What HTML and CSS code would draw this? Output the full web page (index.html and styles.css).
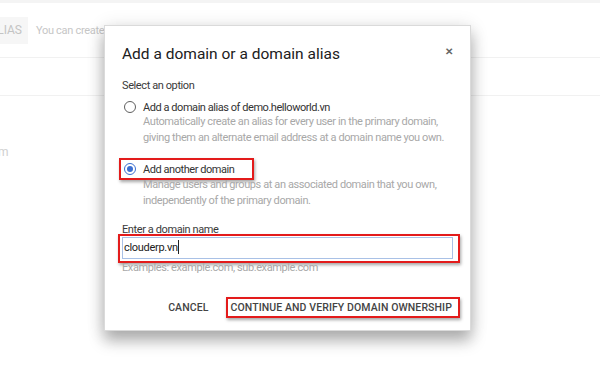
FILE: index.html
```html
<!DOCTYPE html>
<html lang="en">
<head>
  <meta charset="UTF-8">
  <title>Add a domain</title>
  <link rel="stylesheet" href="styles.css">
</head>
<body>
  <div class="page">
    <div class="top-strip"></div>
    <div class="toolbar">
      <span class="ghost-btn">LIAS</span>
      <span class="hint">You can create multiple domain aliases for your organization</span>
    </div>
    <div class="row"></div>
    <div class="row tall"><span class="faded">m</span></div>
  </div>

  <div class="dialog">
    <div class="dialog-head">
      <h1>Add a domain or a domain alias</h1>
      <span class="close">&#x2715;</span>
    </div>
    <p class="label">Select an option</p>

    <div class="option">
      <div class="option-line">
        <span class="radio"></span>
        <span class="option-title">Add a domain alias of demo.helloworld.vn</span>
      </div>
      <p class="option-desc">Automatically create an alias for every user in the primary domain, giving them an alternate email address at a domain name you own.</p>
    </div>

    <div class="option">
      <div class="option-line marked">
        <span class="radio checked"></span>
        <span class="option-title">Add another domain</span>
      </div>
      <p class="option-desc">Manage users and groups at an associated domain that you own, independently of the primary domain.</p>
    </div>

    <p class="label field-label">Enter a domain name</p>
    <div class="field-mark">
      <div class="field">clouderp.vn<span class="caret"></span></div>
    </div>
    <p class="field-help">Examples: example.com, sub.example.com</p>

    <div class="actions">
      <span class="btn">CANCEL</span>
      <span class="btn primary">CONTINUE AND VERIFY DOMAIN OWNERSHIP</span>
    </div>
  </div>
</body>
</html>
```

FILE: styles.css
```css
body {
  margin: 0;
  width: 600px;
  height: 375px;
  overflow: hidden;
  background: #fff;
  font-family: Roboto, "Liberation Sans", sans-serif;
  position: relative;
}
.top-strip {
  height: 3px;
  background: #f4f4f4;
}
.toolbar {
  display: flex;
  align-items: center;
  gap: 8px;
  height: 27px;
  margin-top: 14px;
  padding-bottom: 13px;
  border-bottom: 1px solid #f1f1f1;
}
.ghost-btn {
  background: #f6f6f6;
  color: #c4c4c4;
  font-size: 12px;
  height: 27px;
  line-height: 27px;
  padding: 0 6px 0 0;
  width: 22px;
  overflow: hidden;
  direction: rtl;
}
.hint {
  color: #c6c6c6;
  font-size: 11px;
  letter-spacing: -0.3px;
  white-space: nowrap;
}
.row {
  height: 37px;
  border-bottom: 1px solid #f1f1f1;
}
.row.tall {
  height: 63px;
  border-bottom: none;
  display: flex;
  align-items: flex-end;
}
.faded {
  color: #d0d0d0;
  font-size: 12px;
  margin-left: -2px;
}

.dialog {
  position: absolute;
  left: 104px;
  top: 25px;
  width: 367px;
  height: 306px;
  box-sizing: border-box;
  padding: 0 17px;
  background: #fff;
  border: 1px solid #dadada;
  box-shadow: 0 10px 14px rgba(0, 0, 0, 0.28), 0 2px 18px rgba(0, 0, 0, 0.12);
  color: #333;
}
.dialog-head {
  display: flex;
  justify-content: space-between;
  align-items: center;
  margin-top: 16px;
  height: 24px;
}
.dialog-head h1 {
  margin: 0;
  font-size: 15.5px;
  font-weight: 400;
  color: #202020;
}
.close {
  font-size: 10px;
  color: #666;
  font-weight: 700;
  margin-right: 0;
  margin-top: -6px;
}
.label {
  margin: 13px 0 0;
  font-size: 11px;
  line-height: 13px;
  letter-spacing: -0.4px;
  color: #3a3a3a;
}
.option {
  margin-top: 7px;
}
.option + .option {
  margin-top: 15px;
}
.option-line {
  display: flex;
  align-items: center;
  gap: 7px;
  height: 16px;
  padding-left: 2px;
}
.option-line.marked {
  box-sizing: border-box;
  width: 135px;
  height: 22px;
  margin: -3px 0 -3px -3px;
  padding-left: 3px;
  border: 2px solid #e31b1b;
  box-shadow: 1px 2px 3px rgba(0, 0, 0, 0.35);
}
.radio {
  width: 10px;
  height: 10px;
  border: 1.5px solid #5f5f5f;
  border-radius: 50%;
  flex: none;
  position: relative;
}
.radio.checked {
  border-color: #3b6fd1;
}
.radio.checked::after {
  content: "";
  position: absolute;
  left: 2px;
  top: 2px;
  width: 6px;
  height: 6px;
  border-radius: 50%;
  background: #3b6fd1;
}
.option-title {
  font-size: 11px;
  letter-spacing: -0.45px;
  color: #333;
}
.option-desc {
  margin: -1px 0 0 21px;
  font-size: 11px;
  letter-spacing: -0.4px;
  line-height: 16px;
  color: #a8a8a8;
}
.field-label {
  margin-top: 15px;
  line-height: 12px;
}
.field-mark {
  margin: -2px -7px 0 -4px;
  padding: 1px 5px 2px 2px;
  border: 2px solid #e31b1b;
  box-shadow: 1px 2px 3px rgba(0, 0, 0, 0.35);
}
.field {
  height: 20px;
  border: 1px solid #a9c1e6;
  font-size: 11px;
  letter-spacing: -0.3px;
  line-height: 20px;
  padding-left: 1px;
  color: #222;
}
.caret {
  display: inline-block;
  width: 1px;
  height: 14px;
  background: #222;
  vertical-align: -3px;
}
.field-help {
  margin: -1px 0 0;
  font-size: 11px;
  letter-spacing: -0.4px;
  line-height: 12px;
  color: #a8a8a8;
}
.actions {
  display: flex;
  justify-content: flex-end;
  align-items: center;
  gap: 18px;
  margin-top: 23px;
  margin-right: -7px;
}
.btn {
  font-size: 10.5px;
  font-weight: 500;
  letter-spacing: 0.1px;
  line-height: 12px;
  color: #444;
}
.primary {
  padding: 3px 6px 2px 2px;
  border: 2px solid #e31b1b;
  box-shadow: 1px 2px 3px rgba(0, 0, 0, 0.35);
}
```
